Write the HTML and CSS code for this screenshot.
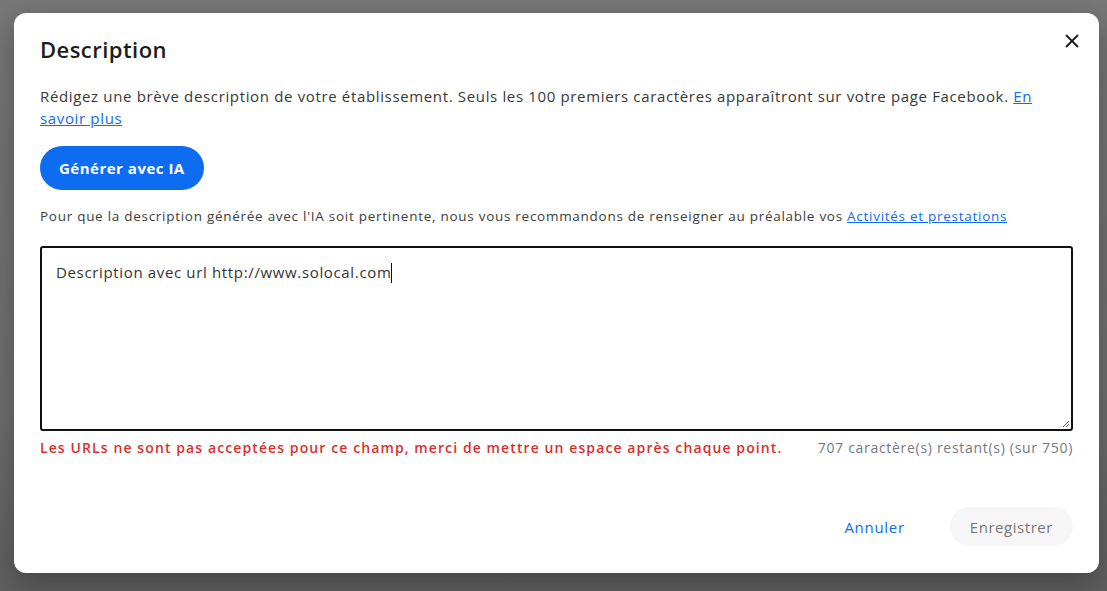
FILE: index.html
```html
<!DOCTYPE html>
<html lang="fr">

<head>
  <meta charset="UTF-8" />
  <meta name="viewport" content="width=device-width, initial-scale=1.0" />
  <title>Description</title>
  <link rel="stylesheet" href="styles.css">
</head>

<body>
  <!-- Description Modal -->
  <div class="modal">
    <div class="modal-header">
      <h2>Description</h2>
      <button class="close-btn" aria-label="Fermer">
        <svg width="14" height="14" viewBox="0 0 14 14">
          <path d="M1.5 1.5L12.5 12.5M12.5 1.5L1.5 12.5" stroke="#1a1a1a" stroke-width="1.8" stroke-linecap="round" />
        </svg>
      </button>
    </div>

    <p class="intro">Rédigez une brève description de votre établissement. Seuls les 100 premiers caractères apparaîtront sur votre page Facebook. <a href="#">En savoir plus</a></p>

    <button class="ai-btn">Générer avec IA</button>

    <p class="hint">Pour que la description générée avec l'IA soit pertinente, nous vous recommandons de renseigner au préalable vos <a href="#">Activités et prestations</a></p>

    <div class="field">
      <div class="textarea">Description avec url http://www.solocal.com<span class="caret"></span></div>
      <svg class="grip" width="9" height="9" viewBox="0 0 9 9">
        <path d="M8 2L2 8M8 5L5 8" stroke="#555" stroke-width="1" />
      </svg>
    </div>

    <div class="field-footer">
      <span class="error">Les URLs ne sont pas acceptées pour ce champ, merci de mettre un espace après chaque point.</span>
      <span class="counter">707 caractère(s) restant(s) (sur 750)</span>
    </div>

    <div class="actions">
      <button class="cancel-btn">Annuler</button>
      <button class="save-btn" disabled>Enregistrer</button>
    </div>
  </div>
</body>

</html>
```

FILE: styles.css
```css
:root {
  --primary: #0e6cf0;
  --text: #383838;
  --error: #d9302c;
}

body {
  font-family: 'Open Sans', sans-serif;
  letter-spacing: 0.65px;
  background: linear-gradient(180deg, #777 0%, #6e6e6e 70%, #5f5f5f 100%);
  margin: 0;
  height: 100vh;
  padding: 13px 8px 0 14px;
  box-sizing: border-box;
  color: var(--text);
}

.modal {
  width: 1085px;
  height: 560px;
  box-sizing: border-box;
  background: #fff;
  border-radius: 12px;
  box-shadow: 0 10px 30px rgba(0, 0, 0, 0.3);
  padding: 21px 26px 27px;
  display: flex;
  flex-direction: column;
}

.modal-header {
  display: flex;
  justify-content: space-between;
  align-items: flex-start;
}

h2 {
  margin: 0;
  font-size: 22px;
  line-height: 30px;
  font-weight: 600;
  letter-spacing: 0.45px;
  color: #1c1c1c;
}

.close-btn {
  border: none;
  background: none;
  padding: 0;
  margin: 0 -6px 0 0;
  width: 14px;
  height: 14px;
  cursor: pointer;
  display: flex;
}

.intro {
  margin: 21px 0 0;
  font-size: 15px;
  line-height: 22px;
}

a {
  color: var(--primary);
  text-decoration: underline;
}

.ai-btn {
  align-self: flex-start;
  margin-top: 17px;
  height: 44px;
  padding: 0 19px;
  border: none;
  border-radius: 22px;
  background: var(--primary);
  color: #fff;
  font-family: inherit;
  font-size: 15px;
  font-weight: 700;
  letter-spacing: 0.5px;
  cursor: pointer;
}

.hint {
  margin: 16px 0 0;
  font-size: 13.5px;
  line-height: 20px;
  letter-spacing: 0.72px;
  color: #3c3c3c;
}

.field {
  position: relative;
  margin-top: 20px;
}

.textarea {
  height: 185px;
  box-sizing: border-box;
  border: 2px solid #111;
  border-radius: 3px;
  padding: 13px 14px;
  font-size: 15px;
  line-height: 22px;
  color: #333;
}

.caret {
  display: inline-block;
  width: 1px;
  height: 20px;
  background: #111;
  vertical-align: -5px;
}

.grip {
  position: absolute;
  right: 3px;
  bottom: 3px;
}

.field-footer {
  display: flex;
  justify-content: space-between;
  align-items: center;
  margin-top: 6px;
  line-height: 22px;
}

.error {
  color: var(--error);
  font-size: 14px;
  font-weight: 600;
  letter-spacing: 1.1px;
}

.counter {
  color: #737a86;
  font-size: 14px;
  letter-spacing: 0.7px;
}

.actions {
  margin-top: auto;
  display: flex;
  justify-content: flex-end;
  align-items: center;
  gap: 24px;
}

.cancel-btn {
  border: none;
  background: none;
  padding: 0 21px;
  height: 39px;
  font-family: inherit;
  font-size: 15px;
  font-weight: 500;
  letter-spacing: 0.7px;
  color: var(--primary);
  cursor: pointer;
}

.save-btn {
  border: none;
  background: #f6f6f6;
  border-radius: 20px;
  height: 39px;
  padding: 0 20px;
  font-family: inherit;
  font-size: 15px;
  font-weight: 500;
  letter-spacing: 0.55px;
  color: #777;
}
```
